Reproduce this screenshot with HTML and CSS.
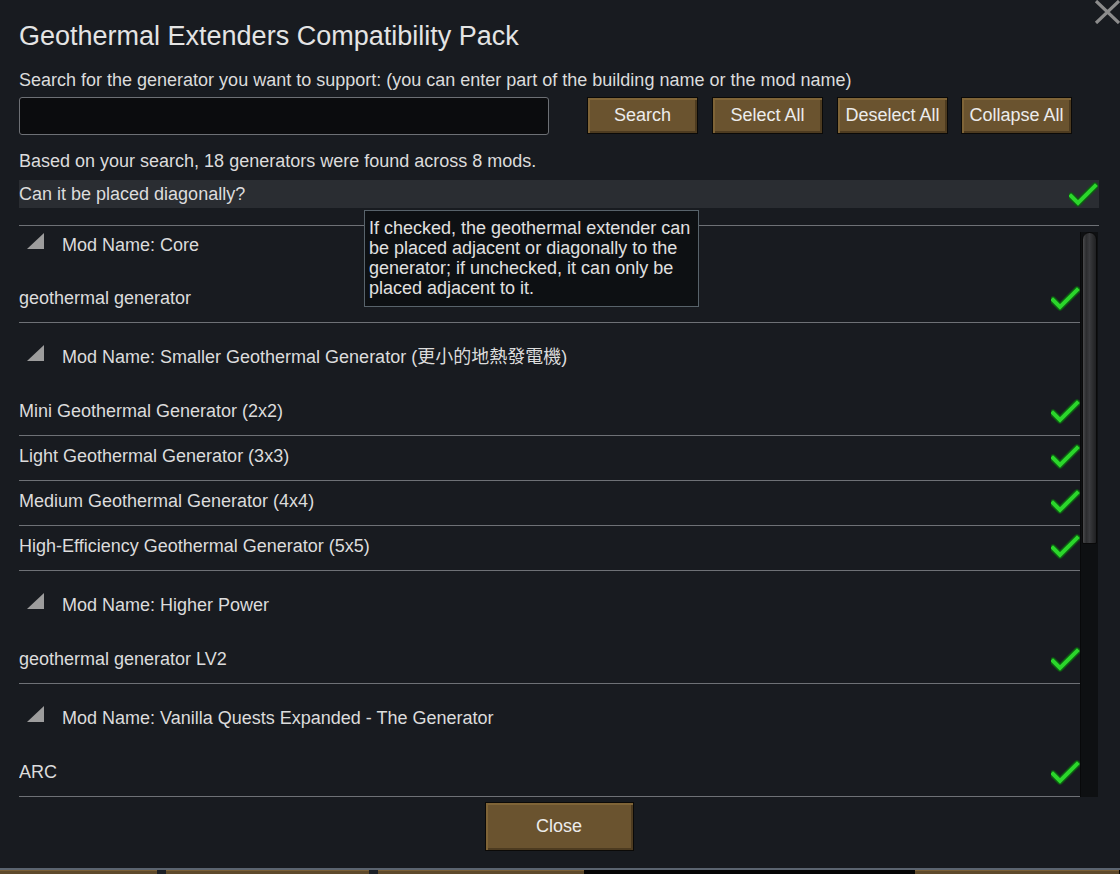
FILE: index.html
```html
<!DOCTYPE html>
<html>
<head>
<meta charset="utf-8">
<link rel="stylesheet" href="styles.css">
</head>
<body>
<div class="dialog">
  <svg class="close-x" width="26" height="24" viewBox="0 0 26 24"><path d="M2 1 L25 23 M25 1 L2 23" stroke="#8c8c8c" stroke-width="3.2" fill="none"/></svg>
  <h1 class="title">Geothermal Extenders Compatibility Pack</h1>
  <div class="label">Search for the generator you want to support: (you can enter part of the building name or the mod name)</div>
  <div class="search-row">
    <div class="input"></div>
    <div class="buttons">
      <div class="btn">Search</div>
      <div class="btn">Select All</div>
      <div class="btn">Deselect All</div>
      <div class="btn btn-last">Collapse All</div>
    </div>
  </div>
  <div class="result">Based on your search, 18 generators were found across 8 mods.</div>
  <div class="diag-row">
    <span>Can it be placed diagonally?</span>
    <svg class="check" width="29" height="25" viewBox="0 0 29 25"><polyline points="2,14 9,21 26,4" fill="none" stroke="#0d5c12" stroke-width="7" stroke-linejoin="round" stroke-linecap="round"/><polyline points="2,14 9,21 26,4" fill="none" stroke="#2bd62b" stroke-width="4" stroke-linejoin="miter" stroke-linecap="square"/></svg>
  </div>
  <div class="divider"></div>
  <div class="scroll">
    <div class="list">
      <div class="group first">
        <div class="mod-header"><svg class="tri" width="17" height="16" viewBox="0 0 17 16"><polygon points="0,16 17,16 17,0" fill="#9d9d9d"/></svg><span>Mod Name: Core</span></div>
        <div class="item"><span>geothermal generator</span><svg class="check" width="29" height="25" viewBox="0 0 29 25"><polyline points="2,14 9,21 26,4" fill="none" stroke="#0d5c12" stroke-width="7" stroke-linecap="round" stroke-linejoin="round"/><polyline points="2,14 9,21 26,4" fill="none" stroke="#2bd62b" stroke-width="4" stroke-linecap="square"/></svg></div>
      </div>
      <div class="group">
        <div class="mod-header"><svg class="tri" width="17" height="16" viewBox="0 0 17 16"><polygon points="0,16 17,16 17,0" fill="#9d9d9d"/></svg><span>Mod Name: Smaller Geothermal Generator (更小的地熱發電機)</span></div>
        <div class="item"><span>Mini Geothermal Generator (2x2)</span><svg class="check" width="29" height="25" viewBox="0 0 29 25"><polyline points="2,14 9,21 26,4" fill="none" stroke="#0d5c12" stroke-width="7" stroke-linecap="round" stroke-linejoin="round"/><polyline points="2,14 9,21 26,4" fill="none" stroke="#2bd62b" stroke-width="4" stroke-linecap="square"/></svg></div>
        <div class="item"><span>Light Geothermal Generator (3x3)</span><svg class="check" width="29" height="25" viewBox="0 0 29 25"><polyline points="2,14 9,21 26,4" fill="none" stroke="#0d5c12" stroke-width="7" stroke-linecap="round" stroke-linejoin="round"/><polyline points="2,14 9,21 26,4" fill="none" stroke="#2bd62b" stroke-width="4" stroke-linecap="square"/></svg></div>
        <div class="item"><span>Medium Geothermal Generator (4x4)</span><svg class="check" width="29" height="25" viewBox="0 0 29 25"><polyline points="2,14 9,21 26,4" fill="none" stroke="#0d5c12" stroke-width="7" stroke-linecap="round" stroke-linejoin="round"/><polyline points="2,14 9,21 26,4" fill="none" stroke="#2bd62b" stroke-width="4" stroke-linecap="square"/></svg></div>
        <div class="item"><span>High-Efficiency Geothermal Generator (5x5)</span><svg class="check" width="29" height="25" viewBox="0 0 29 25"><polyline points="2,14 9,21 26,4" fill="none" stroke="#0d5c12" stroke-width="7" stroke-linecap="round" stroke-linejoin="round"/><polyline points="2,14 9,21 26,4" fill="none" stroke="#2bd62b" stroke-width="4" stroke-linecap="square"/></svg></div>
      </div>
      <div class="group">
        <div class="mod-header"><svg class="tri" width="17" height="16" viewBox="0 0 17 16"><polygon points="0,16 17,16 17,0" fill="#9d9d9d"/></svg><span>Mod Name: Higher Power</span></div>
        <div class="item"><span>geothermal generator LV2</span><svg class="check" width="29" height="25" viewBox="0 0 29 25"><polyline points="2,14 9,21 26,4" fill="none" stroke="#0d5c12" stroke-width="7" stroke-linecap="round" stroke-linejoin="round"/><polyline points="2,14 9,21 26,4" fill="none" stroke="#2bd62b" stroke-width="4" stroke-linecap="square"/></svg></div>
      </div>
      <div class="group">
        <div class="mod-header"><svg class="tri" width="17" height="16" viewBox="0 0 17 16"><polygon points="0,16 17,16 17,0" fill="#9d9d9d"/></svg><span>Mod Name: Vanilla Quests Expanded - The Generator</span></div>
        <div class="item"><span>ARC</span><svg class="check" width="29" height="25" viewBox="0 0 29 25"><polyline points="2,14 9,21 26,4" fill="none" stroke="#0d5c12" stroke-width="7" stroke-linecap="round" stroke-linejoin="round"/><polyline points="2,14 9,21 26,4" fill="none" stroke="#2bd62b" stroke-width="4" stroke-linecap="square"/></svg></div>
      </div>
    </div>
    <div class="scrollbar"><div class="thumb"></div></div>
  </div>
  <div class="footer"><div class="btn btn-close">Close</div></div>
  <div class="tooltip">If checked, the geothermal extender can be placed adjacent or diagonally to the generator; if unchecked, it can only be placed adjacent to it.</div>
</div>
<div class="tabs">
  <div class="tab t1"></div><div class="tab-gap"></div>
  <div class="tab t2"></div><div class="tab-gap"></div>
  <div class="tab t3"></div><div class="tab-black"></div>
  <div class="tab t4"></div>
</div>
</body>
</html>
```

FILE: styles.css
```css
html, body {
  margin: 0;
  padding: 0;
  background: #050505;
  overflow: hidden;
}
body {
  width: 1120px;
  height: 874px;
  font-family: "Liberation Sans", Arial, "Noto Sans CJK TC", sans-serif;
  color: #dcdcdc;
  font-size: 18px;
}
.dialog {
  position: relative;
  box-sizing: border-box;
  height: 870px;
  background: #181b20;
  border-bottom: 2px solid #5b6470;
  padding: 21px 21px 0 19px;
  display: flex;
  flex-direction: column;
}
.close-x {
  position: absolute;
  right: 0;
  top: 0;
}
.title {
  margin: 0;
  font-weight: normal;
  font-size: 27px;
  line-height: 30px;
  color: #e4e4e4;
}
.label {
  margin-top: 19px;
  line-height: 20px;
}
.search-row {
  margin-top: 7px;
  display: flex;
  height: 37px;
}
.input {
  box-sizing: border-box;
  width: 530px;
  height: 38px;
  background: #0b0c0e;
  border: 1px solid #6d7075;
  border-radius: 3px;
}
.buttons {
  display: flex;
  margin-left: 38px;
  gap: 14px;
}
.btn {
  box-sizing: border-box;
  width: 111px;
  height: 37px;
  background: #6a532f;
  border: 1px solid #0b0a08;
  box-shadow: inset 2px 2px 0 #7f6437, inset -2px -2px 0 #4d3b20;
  color: #ececec;
  display: flex;
  align-items: center;
  justify-content: center;
  font-size: 18px;
  white-space: nowrap;
}
.btn-last {
  margin-left: -1px;
}
.result {
  margin-top: 17px;
  line-height: 20px;
}
.diag-row {
  margin-top: 9px;
  height: 28px;
  background: #2a2d32;
  display: flex;
  align-items: center;
  justify-content: space-between;
  padding-right: 1px;
}
.divider {
  margin-top: 17px;
  height: 1px;
  background: #6e7176;
}
.scroll {
  height: 571px;
  display: flex;
  overflow: hidden;
}
.list {
  width: 1061px;
  overflow: hidden;
}
.group .mod-header {
  display: flex;
  align-items: flex-start;
  padding: 24px 0 24px 8px;
  line-height: 20px;
}
.group.first .mod-header {
  padding-top: 9px;
  padding-bottom: 23px;
}
.tri {
  margin-top: -2px;
  margin-right: 18px;
  flex: none;
}
.item {
  display: flex;
  justify-content: space-between;
  align-items: flex-start;
  padding: 10px 0 14px 0;
  line-height: 20px;
  border-bottom: 1px solid #6e7176;
}
.item .check {
  margin-top: -2px;
  margin-bottom: -3px;
}
.scrollbar {
  width: 18px;
  margin-top: 6px;
  background: #0e1012;
  border-left: 1px solid #08090a;
  box-sizing: border-box;
  padding-left: 1px;
}
.thumb {
  box-sizing: border-box;
  width: 15px;
  height: 312px;
  border: 1px solid #090909;
  border-radius: 8px 8px 2px 2px;
  background: linear-gradient(to right, #4a4b4d 0, #2c2d2f 25%, #3a3b3e 50%, #2c2d2f 75%, #1f2022 100%);
}
.footer {
  display: flex;
  justify-content: center;
  margin-top: 5px;
  padding-left: 0;
}
.btn-close {
  width: 149px;
  height: 49px;
  font-size: 18px;
}
.tooltip {
  position: absolute;
  left: 364px;
  top: 210px;
  width: 325px;
  box-sizing: content-box;
  padding: 7px 4px 8px 4px;
  background: #0d1013;
  border: 1px solid #58636b;
  line-height: 20px;
  color: #e0e0e0;
}
.tabs {
  display: flex;
  height: 4px;
  background: #050505;
}
.tab {
  height: 4px;
  background: #5f4a2b;
  border-top: 1px solid #7a5f36;
  box-sizing: border-box;
}
.t1 { width: 157px; }
.t2 { width: 203px; }
.t3 { width: 206px; }
.t4 { width: 204px; }
.tab-gap { width: 9px; background: #1c2026; }
.tab-black { width: 331px; }
```
